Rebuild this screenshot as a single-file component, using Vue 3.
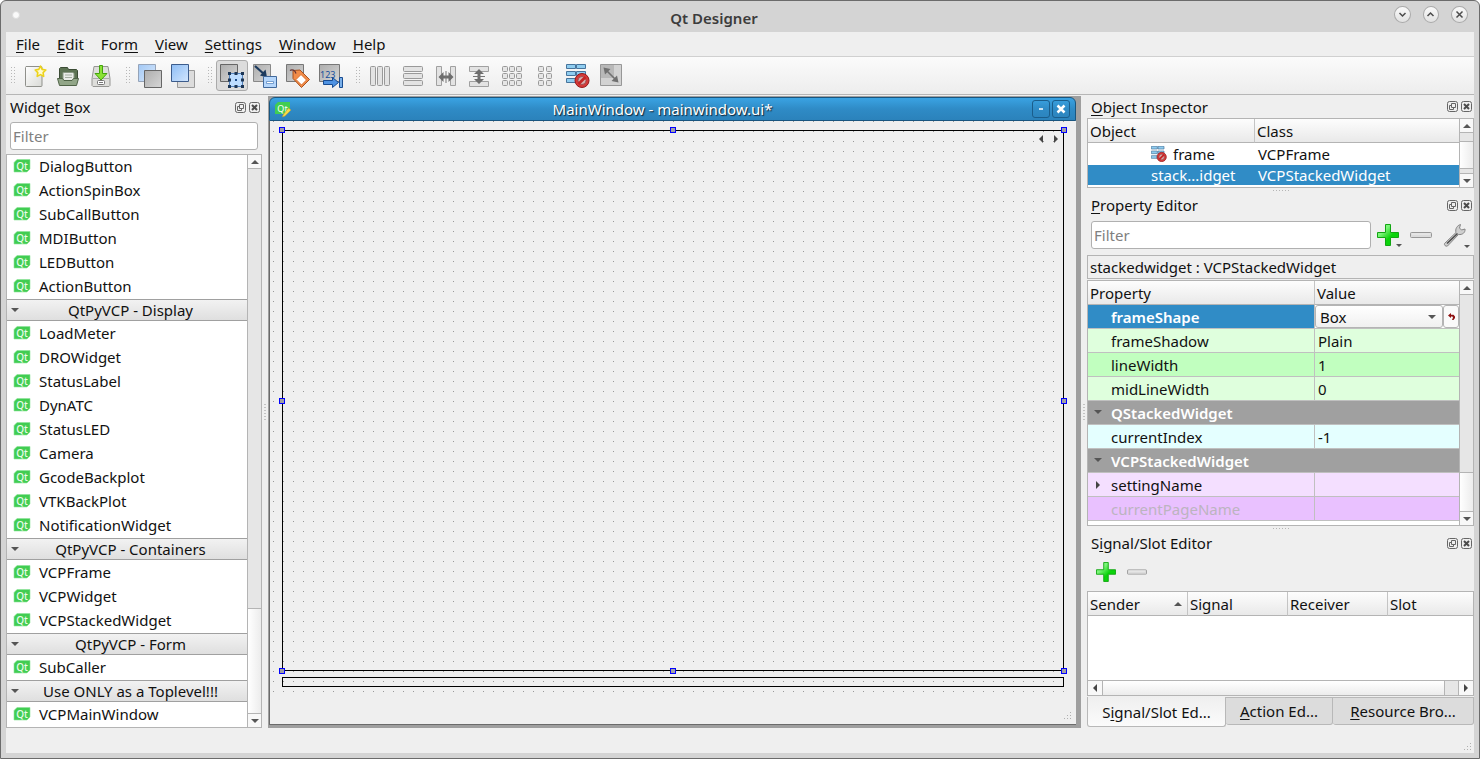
<script setup>
import { ref } from 'vue'

const menus = [
  ['', 'F', 'ile'],
  ['', 'E', 'dit'],
  ['For', 'm', ''],
  ['', 'V', 'iew'],
  ['', 'S', 'ettings'],
  ['', 'W', 'indow'],
  ['', 'H', 'elp'],
]

const toolGroups = [
  [['new', 'New'], ['open', 'Open'], ['save', 'Save']],
  [['back', 'Send to Back'], ['front', 'Bring to Front']],
  [['widgets', 'Edit Widgets'], ['signals', 'Edit Signals/Slots'], ['buddies', 'Edit Buddies'], ['taborder', 'Edit Tab Order']],
  [['cols', 'Lay Out Horizontally'], ['rows', 'Lay Out Vertically'], ['hsplit', 'Horizontal Splitter'], ['vsplit', 'Vertical Splitter'],
    ['grid', 'Lay Out in a Grid'], ['form', 'Lay Out in a Form'], ['break', 'Break Layout'], ['adjust', 'Adjust Size']],
]

const sections = [
  { title: '', items: ['DialogButton', 'ActionSpinBox', 'SubCallButton', 'MDIButton', 'LEDButton', 'ActionButton'] },
  { title: 'QtPyVCP - Display', items: ['LoadMeter', 'DROWidget', 'StatusLabel', 'DynATC', 'StatusLED', 'Camera', 'GcodeBackplot', 'VTKBackPlot', 'NotificationWidget'] },
  { title: 'QtPyVCP - Containers', items: ['VCPFrame', 'VCPWidget', 'VCPStackedWidget'] },
  { title: 'QtPyVCP - Form', items: ['SubCaller'] },
  { title: 'Use ONLY as a Toplevel!!!', items: ['VCPMainWindow'] },
]

const properties = [
  { name: 'frameShadow', value: 'Plain', tone: 'green' },
  { name: 'lineWidth', value: '1', tone: 'green-deep' },
  { name: 'midLineWidth', value: '0', tone: 'green' },
  { name: 'QStackedWidget', group: true },
  { name: 'currentIndex', value: '-1', tone: 'cyan' },
  { name: 'VCPStackedWidget', group: true },
  { name: 'settingName', value: '', tone: 'violet', branch: true },
  { name: 'currentPageName', value: '', tone: 'violet-deep' },
]

const handles = ['nw', 'n', 'ne', 'w', 'e', 'sw', 's', 'se']
const gridCells = [2, 9, 16]
const shape = ref('Box')
const widgetFilter = ref('')
const propertyFilter = ref('')
</script>

<template>
  <div class="window">
    <svg class="defs" width="0" height="0" aria-hidden="true">
      <defs>
        <linearGradient id="gGray" x1="0" y1="0" x2="1" y2="1"><stop offset="0" stop-color="#adadad" /><stop offset="1" stop-color="#d6d6d6" /></linearGradient>
        <linearGradient id="gBlue" x1="0" y1="0" x2="1" y2="1"><stop offset="0" stop-color="#8dbdf5" /><stop offset="1" stop-color="#d3e6fd" /></linearGradient>
        <linearGradient id="gPlus" x1="0" y1="0" x2="1" y2="1"><stop offset="0.3" stop-color="#7df57a" /><stop offset="0.6" stop-color="#0bd30b" /></linearGradient>
        <linearGradient id="gPage" x1="0" y1="0" x2="1" y2="1"><stop offset="0" stop-color="#fff" /><stop offset="1" stop-color="#d9dad6" /></linearGradient>
        <symbol id="break" viewBox="0 0 24 24">
          <g fill="#8fcdf0" stroke="#47749c">
            <path d="M.5 .5h9v4h-9zM10.500 .5h9v4h-9zM.5 7.500h9v4h-9zM10.500 7.500h9v4h-9zM.5 14.500h9v4h-9zM10.500 14.500h9v4h-9z" />
          </g>
          <circle cx="16" cy="16.500" r="7" fill="#d43a3a" stroke="#951919" />
          <circle cx="16" cy="16.500" r="4" fill="#d9b0b0" stroke="#8f4545" stroke-width=".8" />
          <path d="M12.500 20l7-7" stroke="#c52424" stroke-width="2.800" />
        </symbol>
        <symbol id="plus" viewBox="0 0 22 22">
          <path d="M8.500 .5h5v8h8v5h-8v8h-5v-8h-8v-5h8z" fill="url(#gPlus)" stroke="#12a612" stroke-linejoin="round" />
        </symbol>
        <symbol id="minus" viewBox="0 0 22 6">
          <rect x=".5" y=".5" width="21" height="5" rx="1" fill="#dcdcdc" stroke="#979797" />
          <path d="M2 2h18" stroke="#eee" />
        </symbol>
        <symbol id="qt" viewBox="0 0 18 14">
          <path d="M4 .5H17V10L14 13H1V3.500z" fill="#41cd52" stroke="#8fe29a" stroke-width=".6" />
          <text x="9" y="10.500" text-anchor="middle" font-family="Noto Sans, sans-serif" font-size="10" font-weight="500" fill="#e9fbeb">Qt</text>
        </symbol>
        <symbol id="float" viewBox="0 0 11 11">
          <rect x=".5" y=".5" width="10" height="10" rx="2" fill="none" stroke="#666" />
          <path d="M4.500 2.500h4v4h-4zM4.500 4.500h-2v4h4v-2" fill="none" stroke="#666" />
        </symbol>
        <symbol id="close" viewBox="0 0 11 11">
          <rect x=".5" y=".5" width="10" height="10" rx="2" fill="none" stroke="#666" />
          <path d="M3 3l5 5M8 3l-5 5" stroke="#4c4c4c" stroke-width="2" />
        </symbol>
      </defs>
    </svg>

    <header class="titlebar">
      <span class="dot"></span>
      <h1>Qt Designer</h1>
      <div class="winbtns">
        <button aria-label="Minimize"><svg width="9" height="9" viewBox="0 0 9 9"><path d="M1.500 3l3 3 3-3" /></svg></button>
        <button aria-label="Maximize"><svg width="9" height="9" viewBox="0 0 9 9"><path d="M1.500 6l3-3 3 3" /></svg></button>
        <button aria-label="Close"><svg width="9" height="9" viewBox="0 0 9 9"><path d="M1.500 1.500l6 6M7.500 1.500l-6 6" /></svg></button>
      </div>
    </header>

    <div class="client">
      <nav class="menubar">
        <button v-for="m in menus" :key="m.join('')">{{ m[0] }}<u>{{ m[1] }}</u>{{ m[2] }}</button>
      </nav>

      <div class="toolbar" role="toolbar">
        <template v-for="(group, gi) in toolGroups" :key="gi">
          <span class="grip"></span>
          <button v-for="[id, label] in group" :key="id" :class="{ active: id === 'widgets' }" :aria-label="label">
            <svg width="24" height="24" viewBox="0 0 24 24" fill="none">
              <template v-if="id === 'new'">
                <path d="M3 2.500h15a1 1 0 0 1 1 1v18a1 1 0 0 1-1 1H3.500a1 1 0 0 1-1-1v-18z" fill="url(#gPage)" stroke="#8f908b" />
                <path d="M17.500 2l1.600 3.400 3.700.6-2.700 2.600.6 3.800-3.200-1.800-3.300 1.800.6-3.800-2.600-2.600 3.600-.6z" fill="#fffbd0" stroke="#edd31a" stroke-width="1.600" stroke-linejoin="round" />
              </template>
              <template v-else-if="id === 'open'">
                <path d="M3.500 16V4.500l1-1h7l1 2h8l1 1V16z" fill="#5d7353" stroke="#3b4c35" />
                <path d="M7 8.500h10l1 1V17H7z" fill="#e9ece7" stroke="#8b9a85" />
                <path d="M9 11h7M9 13.500h7" stroke="#a3ada0" />
                <path d="M1.500 14.500h5l1.500 2h8l1.500-2h5l-2 7h-17z" fill="#92a688" stroke="#4f6347" />
              </template>
              <template v-else-if="id === 'save'">
                <path d="M5 2.500h14l2 12v7l-1 1H4l-1-1v-7z" fill="#dededb" stroke="#969693" />
                <path d="M3.500 14.500h17" stroke="#aaa" />
                <rect x="8.500" y="16.500" width="7" height="4" rx="1" fill="#fff" stroke="#777" />
                <path d="M10 18.500h4" stroke="#777" />
                <path d="M10.500 1.500h3v8h4.500l-6 6.500-6-6.500h4.500z" fill="#8ae234" stroke="#43a40b" />
              </template>
              <template v-else-if="id === 'back'">
                <path d="M.5 .5h17v17H.5z" fill="url(#gBlue)" stroke="#7e90aa" opacity=".8" />
                <path d="M6.500 6.500h17v17h-17z" fill="url(#gGray)" stroke="#666" />
              </template>
              <template v-else-if="id === 'front'">
                <path d="M6.500 6.500h17v17h-17z" fill="#dcdcdc" stroke="#999" />
                <path d="M.5 .5h17v17H.5z" fill="url(#gBlue)" stroke="#3c5c8c" />
              </template>
              <template v-else-if="id === 'widgets'">
                <path d="M.5 .5h17v17H.5z" fill="url(#gGray)" stroke="#666" />
                <path d="M9.500 9.500h13v13h-13z" fill="#bcdcff" stroke="#5382bd" />
                <path d="M8 8h3v3H8zM14.500 8h3v3h-3zM21 8h3v3h-3zM8 14.500h3v3H8zM21 14.500h3v3h-3zM8 21h3v3H8zM14.500 21h3v3h-3zM21 21h3v3h-3z" fill="#1c3554" />
                <path d="M15 15h2v2h-2z" fill="#1c4d8c" />
              </template>
              <template v-else-if="id === 'signals'">
                <path d="M.5 .5h17v17H.5z" fill="url(#gGray)" stroke="#888" />
                <path d="M2 2l10 9" stroke="#1c3a5e" stroke-width="2.200" />
                <path d="M14 13.500l-7-2 5.500-6z" fill="#1c3a5e" />
                <path d="M10.500 12.500h13v11h-13z" fill="#b5d6fb" stroke="#41699c" />
                <path d="M13.500 17.500h7v2h-7z" fill="#fff" stroke="#4d7fbc" stroke-width=".7" />
              </template>
              <template v-else-if="id === 'buddies'">
                <path d="M.5 .5h17v17H.5z" fill="url(#gGray)" stroke="#777" />
                <path d="M7 6.500l7-.5 9.500 9.500-8 8L7 14.500z" fill="#f18b48" stroke="#a9511c" />
                <path d="M15 10.500l5.500 5.500-5 5-5.500-5.500z" fill="#fff" stroke="#de6f2a" />
                <path d="M10 9.500C9 6 6 5 4 6.500" stroke="#633" stroke-width="1.200" />
              </template>
              <template v-else-if="id === 'taborder'">
                <path d="M.5 .5h20v17H.5z" fill="url(#gGray)" stroke="#777" />
                <text x="1" y="14" font-size="9" fill="#164f9c">123</text>
                <path d="M4.500 16.500h9v-3l6 5-6 5v-3h-9z" fill="#4e92e2" stroke="#174b91" />
                <path d="M20.500 13.500h3v10h-3z" fill="#79afe9" stroke="#174b91" />
              </template>
              <g v-else-if="id === 'cols'" fill="#e3e3e3" stroke="#999">
                <rect v-for="x in gridCells" :key="x" :x="x + .5" y="2.500" width="5" height="19" rx="1" />
              </g>
              <g v-else-if="id === 'rows'" fill="#e3e3e3" stroke="#999">
                <rect v-for="y in gridCells" :key="y" x="2.500" :y="y + .5" width="19" height="5" rx="1" />
              </g>
              <template v-else-if="id === 'hsplit'">
                <path d="M2.500 2.500h5v19h-5zM16.500 2.500h5v19h-5z" fill="#e3e3e3" stroke="#a0a0a0" />
                <path d="M4.500 13l5-5v3.500h5V8l5 5-5 5v-3.500h-5V18z" fill="#6e6e6e" />
                <path d="M12 7v12" stroke="#777" />
              </template>
              <template v-else-if="id === 'vsplit'">
                <path d="M2.500 2.500h19v5h-19zM2.500 17.500h19v5h-19z" fill="#e3e3e3" stroke="#a0a0a0" />
                <path d="M12 5l5 5h-3.500v5H17l-5 5-5-5h3.500v-5H7z" fill="#6e6e6e" />
                <path d="M6 12.500h12" stroke="#777" />
              </template>
              <g v-else-if="id === 'grid'" fill="#e6e6e6" stroke="#999">
                <template v-for="y in gridCells" :key="y">
                  <rect v-for="x in gridCells" :key="x" :x="x + .5" :y="y + .5" width="5" height="5" rx="1" />
                </template>
              </g>
              <g v-else-if="id === 'form'" fill="#e6e6e6" stroke="#999">
                <template v-for="y in gridCells" :key="y">
                  <rect x="5.500" :y="y + .5" width="5" height="5" rx="1" />
                  <rect x="13.500" :y="y + .5" width="5" height="5" rx="1" />
                </template>
              </g>
              <use v-else-if="id === 'break'" href="#break" />
              <template v-else>
                <path d="M1.500 .5h21v21h-21z" fill="#d2d2d2" stroke="#979797" />
                <path d="M2 1h13v13H2z" fill="#b8b8b8" />
                <path d="M6 5l12 12" stroke="#707070" stroke-width="1.600" />
                <path d="M4.500 3.500l7 1.500-5.500 5.500zM19.500 18.500l-7-1.500 5.500-5.500z" fill="#707070" />
              </template>
            </svg>
          </button>
        </template>
      </div>

      <main class="work">
        <section class="dock left">
          <div class="dock-title">
            <h2>Widget <u>B</u>ox</h2>
            <button aria-label="Float Widget Box"><svg width="11" height="11"><use href="#float" /></svg></button>
            <button aria-label="Close Widget Box"><svg width="11" height="11"><use href="#close" /></svg></button>
          </div>
          <input v-model="widgetFilter" class="filter" type="text" placeholder="Filter" aria-label="Filter widgets" />
          <div class="widget-list">
            <div class="widget-scroll">
              <div v-for="s in sections" :key="s.title">
                <button v-if="s.title" class="category"><i class="tri down"></i><span>{{ s.title }}</span></button>
                <ul>
                  <li v-for="w in s.items" :key="w"><svg width="18" height="14"><use href="#qt" /></svg>{{ w }}</li>
                </ul>
              </div>
            </div>
            <div class="vbar">
              <button aria-label="Scroll up"><i class="tri up"></i></button>
              <span class="track"></span>
              <span class="thumb thumb-widgets"></span>
              <button aria-label="Scroll down"><i class="tri down"></i></button>
            </div>
          </div>
        </section>

        <div class="vsplit"></div>

        <section class="mdi">
          <div class="sub">
            <div class="sub-title">
              <svg width="18" height="18" viewBox="0 0 18 18">
                <path d="M3 2h12v9l-3 3H0V5z" fill="#41cd52" />
                <text x="7.500" y="11.500" text-anchor="middle" font-size="9" fill="#fff">Qt</text>
                <path d="M8 15l5.500-7 2.500 2-6 6-2.500 1z" fill="#f7d948" stroke="#b89a34" stroke-width=".5" />
              </svg>
              <h2>MainWindow - mainwindow.ui*</h2>
              <button aria-label="Minimize form"><svg width="16" height="16"><path d="M6 8h4" stroke="#fff" stroke-width="1.500" /></svg></button>
              <button aria-label="Close form"><svg width="16" height="16"><path d="M4.500 4.500l7 7M11.500 4.500l-7 7" stroke="#fff" stroke-width="2.500" /></svg></button>
            </div>
            <div class="form">
              <div class="canvas">
                <div class="stacked">
                  <span class="pager"><i class="tri prev"></i><i class="tri next"></i></span>
                  <span v-for="h in handles" :key="h" class="handle" :class="h"></span>
                </div>
                <div class="frame"></div>
              </div>
              <div class="form-status"><i class="sizegrip"></i></div>
            </div>
          </div>
        </section>

        <div class="vsplit"></div>

        <aside class="dock right">
          <div class="dock-title">
            <h2><u>O</u>bject Inspector</h2>
            <button aria-label="Float Object Inspector"><svg width="11" height="11"><use href="#float" /></svg></button>
            <button aria-label="Close Object Inspector"><svg width="11" height="11"><use href="#close" /></svg></button>
          </div>
          <div class="pane inspector">
            <table>
              <colgroup><col class="c-object" /><col /></colgroup>
              <thead><tr><th>Object</th><th>Class</th></tr></thead>
              <tbody>
                <tr>
                  <td class="obj"><svg width="16" height="16"><use href="#break" /></svg>frame</td>
                  <td>VCPFrame</td>
                </tr>
                <tr class="selected"><td class="obj">stack...idget</td><td>VCPStackedWidget</td></tr>
              </tbody>
            </table>
            <div class="vbar">
              <button aria-label="Scroll up"><i class="tri up"></i></button>
              <span class="track"></span>
              <span class="thumb thumb-objects"></span>
              <span class="track-end"></span>
              <button aria-label="Scroll down"><i class="tri down"></i></button>
            </div>
          </div>
          <div class="hsplit"></div>

          <div class="dock-title">
            <h2><u>P</u>roperty Editor</h2>
            <button aria-label="Float Property Editor"><svg width="11" height="11"><use href="#float" /></svg></button>
            <button aria-label="Close Property Editor"><svg width="11" height="11"><use href="#close" /></svg></button>
          </div>
          <div class="prop-tools">
            <input v-model="propertyFilter" class="filter" type="text" placeholder="Filter" aria-label="Filter properties" />
            <button aria-label="Add dynamic property"><svg width="22" height="22"><use href="#plus" /></svg><i class="tri small"></i></button>
            <button aria-label="Remove dynamic property"><svg width="22" height="6"><use href="#minus" /></svg></button>
            <button aria-label="Configure property editor">
              <svg width="24" height="24" viewBox="0 0 24 24">
                <path d="M1.500 20.500L13 9.500c-1-3.500 1-7 4.500-8L16.500 5l2 2 3.500-1c.5 3.500-2.500 6-6.500 5.500L4.500 23c-2 .8-3.500-1-3-2.500z" fill="#cfcfcf" stroke="#858585" />
                <path d="M4 20.500L14.500 10.500" stroke="#4b4b4b" stroke-width="1.600" />
              </svg>
              <i class="tri small"></i>
            </button>
          </div>
          <div class="object-name">stackedwidget : VCPStackedWidget</div>
          <div class="pane props">
            <table>
              <colgroup><col class="c-prop" /><col /></colgroup>
              <thead><tr><th>Property</th><th>Value</th></tr></thead>
              <tbody>
                <tr class="current">
                  <td><label for="frame-shape">frameShape</label></td>
                  <td class="editor">
                    <div class="combo">
                      <select id="frame-shape" v-model="shape"><option>Box</option><option>Panel</option><option>NoFrame</option></select>
                      <i class="tri down"></i>
                      <button aria-label="Reset frameShape">
                        <svg width="7" height="7" viewBox="0 0 7 7"><path d="M0 2.500L3 0v1.700h2.500L7 3.500V5L5.500 7H4l1-2.500-.6-1H3V5z" fill="#8e1010" /></svg>
                      </button>
                    </div>
                  </td>
                </tr>
                <tr v-for="p in properties" :key="p.name" :class="[p.tone, { group: p.group }]">
                  <td :colspan="p.group ? 2 : 1"><i v-if="p.group" class="tri down mark"></i><i v-if="p.branch" class="tri next mark"></i>{{ p.name }}</td>
                  <td v-if="!p.group">{{ p.value }}</td>
                </tr>
              </tbody>
            </table>
            <div class="vbar">
              <button aria-label="Scroll up"><i class="tri up"></i></button>
              <span class="track"></span>
              <span class="thumb thumb-props"></span>
              <button aria-label="Scroll down"><i class="tri down"></i></button>
            </div>
          </div>
          <div class="hsplit"></div>

          <div class="dock-title">
            <h2>S<u>i</u>gnal/Slot Editor</h2>
            <button aria-label="Float Signal/Slot Editor"><svg width="11" height="11"><use href="#float" /></svg></button>
            <button aria-label="Close Signal/Slot Editor"><svg width="11" height="11"><use href="#close" /></svg></button>
          </div>
          <div class="signal-tools">
            <button aria-label="Add connection"><svg width="20" height="20"><use href="#plus" /></svg></button>
            <button aria-label="Remove connection"><svg width="20" height="6" viewBox="0 0 22 6"><use href="#minus" /></svg></button>
          </div>
          <div class="signals">
            <table>
              <thead><tr><th class="sorted">Sender<i class="tri up"></i></th><th>Signal</th><th>Receiver</th><th>Slot</th></tr></thead>
            </table>
            <div class="hbar">
              <button aria-label="Scroll left"><i class="tri prev"></i></button>
              <span class="thumb"></span>
              <span class="rest"></span>
              <button aria-label="Scroll right"><i class="tri next"></i></button>
            </div>
          </div>
          <div class="tabs" role="tablist">
            <button role="tab" aria-selected="true" class="on">S<u>i</u>gnal/Slot Ed...</button>
            <button role="tab" aria-selected="false"><u>A</u>ction Ed...</button>
            <button role="tab" aria-selected="false" class="wide"><u>R</u>esource Bro...</button>
          </div>
        </aside>
      </main>

      <footer class="status"><i class="sizegrip"></i></footer>
    </div>
  </div>
</template>

<style>
body {
  background: #fff;
}
</style>

<style scoped>
* {
  box-sizing: border-box;
}
.window {
  min-height: 100vh;
  display: flex;
  flex-direction: column;
  padding: 0 5px 5px;
  border: 1px solid #6b6b6b;
  border-radius: 6px 6px 0 0;
  background: #d4d4d4;
  font: 15px/20px "Noto Sans", sans-serif;
  color: #111;
}
.defs {
  position: absolute;
}
button,
input,
select {
  font: inherit;
  color: inherit;
}
button {
  margin: 0;
  padding: 0;
  border: 0;
  background: none;
  display: flex;
  align-items: center;
  justify-content: center;
}
h1,
h2,
ul {
  margin: 0;
  padding: 0;
  font: inherit;
}
u {
  text-decoration-thickness: 1px;
  text-underline-offset: 2px;
  text-decoration-skip-ink: none;
}
svg {
  display: block;
  flex: none;
}

/* triangles */
.tri {
  flex: none;
  width: 0;
  height: 0;
  border: 4px solid transparent;
}
.tri.up {
  border-top: 0;
  border-bottom-color: #555;
}
.tri.down {
  border-bottom: 0;
  border-top-color: #555;
}
.tri.prev {
  border-left: 0;
  border-right-color: #444;
}
.tri.next {
  border-right: 0;
  border-left-color: #444;
}
.tri.small {
  border-width: 3px;
  border-bottom: 0;
  border-top-color: #555;
}

/* window chrome */
.titlebar {
  height: 31px;
  display: grid;
  grid-template-columns: 80px 1fr 80px;
  align-items: center;
}
.titlebar h1 {
  text-align: center;
  font-weight: 600;
  color: #3c3c3c;
  padding: 2px 52px 0 0;
}
.dot {
  width: 8px;
  height: 8px;
  margin: 0 0 4px 6px;
  border-radius: 50%;
  background: #fafafa;
  border: 1px solid #ddd;
}
.winbtns {
  display: flex;
  gap: 12px;
  justify-content: flex-end;
  padding: 0 6px 4px 0;
}
.winbtns button {
  width: 17px;
  height: 17px;
  border: 1px solid #aaa;
  border-radius: 50%;
  background: linear-gradient(#fafafa, #e2e2e2);
}
.winbtns path {
  fill: none;
  stroke: #4c4c4c;
  stroke-width: 1.5;
}
.client {
  flex: 1;
  display: flex;
  flex-direction: column;
  background: #efefef;
}
.menubar {
  height: 25px;
  display: flex;
  gap: 1px;
  padding-left: 2px;
  border-bottom: 1px solid #d0d0d0;
}
.menubar button {
  padding: 0 8px;
}
.toolbar {
  height: 38px;
  display: flex;
  align-items: center;
  background: linear-gradient(#fbfbfb, #ededed);
  border-bottom: 1px solid #b6b6b6;
}
.toolbar button {
  width: 32px;
  height: 31px;
  margin-right: 1px;
}
.toolbar .active {
  background: #dcdcdc;
  border: 1px solid #aaa;
  border-radius: 3px;
}
.grip {
  width: 4px;
  height: 18px;
  margin: 0 4px 0 8px;
  background: conic-gradient(at 1px 1px, transparent 75%, #b8b8b8 0) 0 0 / 3px 3px;
}
.grip:first-child {
  margin-left: 5px;
}

/* layout */
.work {
  flex: 1;
  display: grid;
  grid-template-columns: 256px 6px minmax(0, 1fr) 6px 387px;
}
.dock {
  display: flex;
  flex-direction: column;
}
.dock-title {
  height: 24px;
  flex: none;
  display: flex;
  align-items: center;
  gap: 3px;
  padding: 0 2px 0 4px;
}
.dock-title h2 {
  flex: 1;
}
.filter {
  height: 28px;
  min-width: 0;
  padding: 0 2px;
  border: 1px solid #b0b0b0;
  border-radius: 3px;
  background: #fff;
}
.filter::placeholder {
  color: #808080;
  opacity: 1;
}
.vsplit {
  align-self: center;
  justify-self: center;
  width: 2px;
  height: 16px;
  background: repeating-linear-gradient(#c2c2c2 0 1px, transparent 1px 3px);
}
.hsplit {
  width: 16px;
  height: 5px;
  flex: none;
  align-self: center;
  background: repeating-linear-gradient(90deg, #b5b5b5 0 1px, transparent 1px 3px) 0 2px / 100% 1px no-repeat;
}

/* scroll bars */
.vbar {
  width: 14px;
  flex: none;
  display: flex;
  flex-direction: column;
  border-left: 1px solid #b4b4b4;
  background: #e6e6e6;
}
.vbar button {
  height: 14px;
  background: #f8f8f8;
  border-bottom: 1px solid #b4b4b4;
}
.vbar button:last-child {
  border-bottom: 0;
  border-top: 1px solid #b4b4b4;
}
.track {
  flex: 1;
}
.thumb {
  border-top: 1px solid #b4b4b4;
  background: linear-gradient(90deg, #fff, #ececec);
}
.thumb-widgets {
  height: 105px;
}
.thumb-objects {
  height: 28px;
  border-bottom: 1px solid #b4b4b4;
}
.thumb-props {
  height: 39px;
}
.track-end {
  height: 4px;
}

/* widget box */
.left .dock-title {
  margin-bottom: 3px;
}
.left .filter {
  margin: 0 4px 4px;
}
.widget-list {
  flex: 1;
  display: flex;
  border: 1px solid #b4b4b4;
  background: #fff;
}
.widget-scroll {
  flex: 1;
}
.widget-list ul {
  list-style: none;
}
.widget-list li {
  height: 24px;
  display: flex;
  align-items: center;
  gap: 8px;
  padding: 0 0 2px 6px;
}
.category {
  width: 100%;
  height: 22px;
  margin-bottom: 1px;
  padding: 0 5px 0 4px;
  border: solid #a0a0a0;
  border-width: 1px 0;
  background: linear-gradient(#f2f2f2, #dfdfdf);
}
.category span {
  flex: 1;
}

/* form window */
.mdi {
  margin-top: 1px;
  padding: 1px 5px 3px 1px;
  background: #9f9f9f;
  display: flex;
}
.sub {
  flex: 1;
  display: flex;
  flex-direction: column;
}
.sub-title {
  height: 24px;
  display: flex;
  align-items: center;
  gap: 2px;
  padding: 0 5px 0 5px;
  border: 1px solid #195680;
  border-radius: 6px 6px 0 0;
  background: linear-gradient(#3aa3e3, #2f8bc6 50%, #2b82bb);
  color: #fff;
}
.sub-title h2 {
  flex: 1;
  text-align: center;
  text-shadow: 1px 1px 1px #123;
}
.sub-title button {
  width: 18px;
  height: 18px;
  border: 1px solid #1a5d8b;
  border-radius: 3px;
}
.form {
  flex: 1;
  display: flex;
  flex-direction: column;
  padding: 0 3px;
  border: solid #6b6b6b;
  border-width: 0 0 1px 1px;
  background: #efefef;
}
.canvas {
  flex: 1;
  display: flex;
  flex-direction: column;
  gap: 6px;
  padding: 9px 9px 8px;
  background: conic-gradient(at 1px 1px, transparent 75%, #999 0) 0 0 / 10px 10px;
}
.stacked {
  position: relative;
  flex: 1;
  border: 1px solid #000;
}
.frame {
  height: 10px;
  border: 1px solid #000;
}
.pager {
  position: absolute;
  top: 4px;
  right: 5px;
  display: flex;
  gap: 11px;
}
.handle {
  position: absolute;
  width: 6px;
  height: 6px;
  border: 1px solid #00f;
  background: #a0a0a4;
}
.nw,
.n,
.ne {
  top: -4px;
}
.w,
.e {
  top: calc(50% - 3px);
}
.sw,
.s,
.se {
  bottom: -4px;
}
.nw,
.w,
.sw {
  left: -4px;
}
.n,
.s {
  left: calc(50% - 3px);
}
.ne,
.e,
.se {
  right: -4px;
}
.form-status {
  height: 29px;
  display: flex;
  justify-content: flex-end;
  align-items: flex-end;
}
.sizegrip {
  width: 12px;
  height: 12px;
  margin: 3px 0;
  clip-path: polygon(100% 0, 100% 100%, 0 100%);
  background: conic-gradient(at 1px 1px, transparent 75%, #b0b0b0 0) 0 0 / 3px 3px;
}

/* tables */
table {
  width: 100%;
  border-collapse: separate;
  border-spacing: 0;
  table-layout: fixed;
}
th,
td {
  padding: 0 3px;
  text-align: left;
  font-weight: 400;
  white-space: nowrap;
}
th {
  height: 24px;
  padding: 0 2px;
  background: linear-gradient(#fdfdfd, #e9e9e9);
  border-bottom: 1px solid #b4b4b4;
}
th + th {
  border-left: 1px solid #c4c4c4;
}
.pane {
  display: flex;
  align-items: stretch;
  border: 1px solid #b4b4b4;
  background: #fff;
}
.pane table {
  flex: 1;
  width: 0;
  align-self: flex-start;
}
.right .dock-title:first-child {
  height: 23px;
}
.inspector {
  height: 70px;
}
.c-object {
  width: 166px;
}
.inspector td {
  height: 22px;
  padding-left: 4px;
}
.inspector .obj {
  padding-left: 63px;
}
.obj svg {
  display: inline-block;
  vertical-align: -2px;
  margin-right: 6px;
}
.inspector .selected td {
  height: 20px;
  line-height: 20px;
}
.selected {
  background: #308cc6;
  color: #fff;
}
.prop-tools {
  display: flex;
  align-items: center;
  gap: 11px;
  margin: 4px 7px 6px 4px;
}
.prop-tools .filter {
  flex: 1;
  margin-right: -5px;
}
.prop-tools button {
  position: relative;
}
.prop-tools .small {
  position: absolute;
  right: -3px;
  bottom: -1px;
}
.object-name {
  height: 24px;
  margin-bottom: 1px;
  padding: 1px 2px;
  border: 1px solid #b4b4b4;
}
.c-prop {
  width: 226px;
}
.props {
  height: 246px;
}
.props td {
  height: 24px;
  border-bottom: 1px solid #c0c0c0;
}
.props td + td {
  border-left: 1px solid #c0c0c0;
}
.props td:first-child {
  position: relative;
  padding-left: 23px;
}
.mark {
  position: absolute;
  left: 6px;
  top: 9px;
}
.mark.next {
  left: 8px;
  top: 8px;
}
.current td:first-child {
  background: #308cc6;
  color: #fff;
  font-weight: 600;
}
.current .editor {
  padding: 0;
}
.combo {
  height: 23px;
  display: flex;
  align-items: center;
}
.combo select {
  appearance: none;
  flex: 1;
  height: 23px;
  margin-right: -11px;
  padding: 0 4px;
  border: 1px solid #b4b4b4;
  border-radius: 3px;
  background: linear-gradient(#fff, #f0f0f0);
}
.combo .tri {
  pointer-events: none;
  margin-right: 7px;
  margin-left: -4px;
}
.combo button {
  width: 16px;
  height: 23px;
  border: 1px solid #b4b4b4;
  border-radius: 3px;
  background: #fafafa;
}
.green {
  background: #dfffdd;
}
.green-deep {
  background: #c1ffbf;
}
.cyan {
  background: #e4ffff;
}
.violet {
  background: #f4dfff;
}
.violet-deep {
  background: #e9c1ff;
}
.violet-deep td {
  color: #bcb4c0;
}
.group td {
  background: #a0a0a0;
  color: #fff;
  font-weight: 600;
}
.signal-tools {
  height: 36px;
  flex: none;
  display: flex;
  align-items: center;
  gap: 11px;
  padding: 0 0 2px 9px;
}
.signals {
  flex: 1;
  display: flex;
  flex-direction: column;
  justify-content: space-between;
  border: 1px solid #b4b4b4;
  background: #fff;
}
.signals th {
  width: 100px;
}
.signals th.sorted {
  width: 99px;
}
.signals th:last-child {
  width: auto;
}
.sorted .tri {
  float: right;
  margin: 8px 3px 0 0;
}
.hbar {
  height: 15px;
  display: flex;
  border-top: 1px solid #b4b4b4;
}
.hbar button {
  width: 14px;
  background: #f8f8f8;
}
.hbar .thumb {
  flex: 1;
  border: solid #b4b4b4;
  border-width: 0 1px;
  background: linear-gradient(#fff, #ececec);
}
.rest {
  width: 14px;
  border-right: 1px solid #b4b4b4;
  background: #e6e6e6;
}
.tabs {
  height: 32px;
  display: flex;
  align-items: flex-start;
  padding-top: 1px;
}
.tabs button {
  height: 28px;
  width: 107px;
  border: 1px solid #b8b8b8;
  border-left: 0;
  border-radius: 0 0 3px 3px;
  background: #dcdcdc;
}
.tabs .on {
  width: 139px;
  height: 30px;
  border-left: 1px solid #b8b8b8;
  border-top: 0;
  background: linear-gradient(#efefef, #fbfbfb);
}
.tabs .wide {
  flex: 1;
}
.status {
  height: 25px;
  display: flex;
  justify-content: flex-end;
  align-items: flex-end;
}
.status .sizegrip {
  margin: 0 1px 1px 0;
}
</style>
